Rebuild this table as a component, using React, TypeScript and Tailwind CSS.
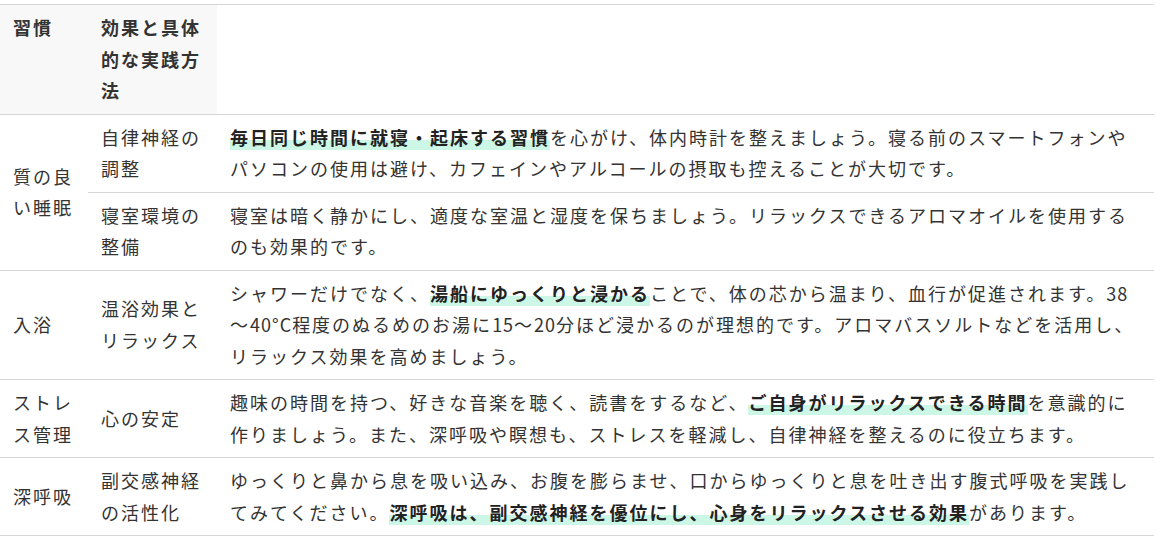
import React from "react";

const M = ({ children }: { children: React.ReactNode }) => (
  <strong className="font-bold text-[#222] bg-[linear-gradient(transparent_60%,#ccf6e6_60%)]">
    {children}
  </strong>
);

const L = ({ children }: { children: React.ReactNode }) => (
  <span className="tracking-[1px]">{children}</span>
);

const td = "px-[13px] py-[7px] align-middle border-b border-[#d6d6d6]";

export default function App() {
  return (
    <div className="w-[1156px] h-[537px] bg-white pt-[4px]">
      <table
        className="w-[1154px] table-fixed border-collapse border-t border-[#d6d6d6] text-[18px] leading-[31.5px] tracking-[2px] text-[#333] text-left"
        style={{ fontFamily: '"Noto Sans CJK JP", "Noto Sans", sans-serif' }}
      >
        <colgroup>
          <col className="w-[88px]" />
          <col className="w-[129px]" />
          <col />
        </colgroup>
        <thead>
          <tr>
            <th className="px-[13px] py-[7px] align-top font-bold bg-[#f8f8f8] border-b border-[#d6d6d6]">習慣</th>
            <th className="px-[13px] py-[7px] align-top font-bold bg-[#f8f8f8] border-b border-[#d6d6d6]">効果と具体的な実践方法</th>
            <th className="border-b border-[#d6d6d6] bg-white"></th>
          </tr>
        </thead>
        <tbody>
          <tr>
            <td rowSpan={2} className={td}>質の良い睡眠</td>
            <td className={td}>自律神経の調整</td>
            <td className={td}>
              <M>毎日同じ時間に就寝・起床する習慣</M>を心がけ、体内時計を整えましょう。寝る前のスマートフォンやパソコンの使用は避け、カフェインやアルコールの摂取も控えることが大切です。
            </td>
          </tr>
          <tr>
            <td className={td}>寝室環境の整備</td>
            <td className={td}>
              寝室は暗く静かにし、適度な室温と湿度を保ちましょう。リラックスできるアロマオイルを使用するのも効果的です。
            </td>
          </tr>
          <tr>
            <td className={td}>入浴</td>
            <td className={td}>温浴効果とリラックス</td>
            <td className={`${td} [line-break:loose]`}>
              シャワーだけでなく、<M>湯船にゆっくりと浸かる</M>ことで、体の芯から温まり、血行が促進されます。<L>38</L><wbr />〜<L>40°C</L>程度のぬるめのお湯に<L>15</L>〜<L>20</L>分ほど浸かるのが理想的です。アロマバスソルトなどを活用し、リラックス効果を高めましょう。
            </td>
          </tr>
          <tr>
            <td className={td}>ストレス管理</td>
            <td className={td}>心の安定</td>
            <td className={td}>
              趣味の時間を持つ、好きな音楽を聴く、読書をするなど、<M>ご自身がリラックスできる時間</M>を意識的に作りましょう。また、深呼吸や瞑想も、ストレスを軽減し、自律神経を整えるのに役立ちます。
            </td>
          </tr>
          <tr>
            <td className={td}>深呼吸</td>
            <td className={td}>副交感神経の活性化</td>
            <td className={td}>
              ゆっくりと鼻から息を吸い込み、お腹を膨らませ、口からゆっくりと息を吐き出す腹式呼吸を実践してみてください。<M>深呼吸は、副交感神経を優位にし、心身をリラックスさせる効果</M>があります。
            </td>
          </tr>
        </tbody>
      </table>
    </div>
  );
}
